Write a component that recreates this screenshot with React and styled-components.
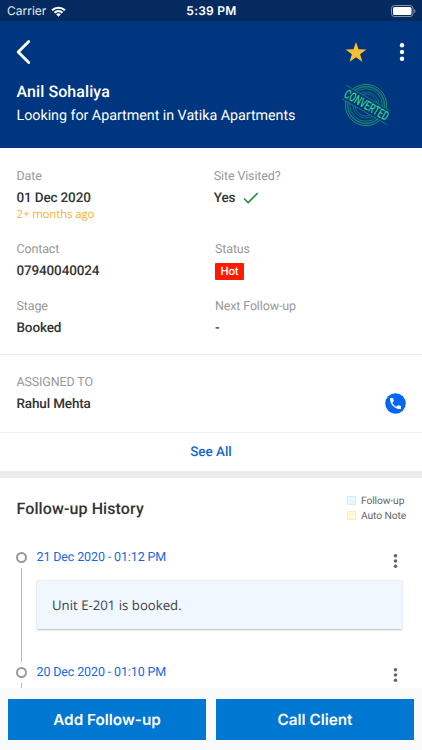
import React from "react";
import styled, { createGlobalStyle } from "styled-components";

const GlobalStyle = createGlobalStyle`
  * { box-sizing: border-box; }
  body { margin: 0; background: #fff; overflow: hidden; }
`;

const Screen = styled.div`
  width: 422px;
  height: 750px;
  display: flex;
  flex-direction: column;
  overflow: hidden;
  background: #fff;
  color: #333;
  font-family: Roboto, "Liberation Sans", sans-serif;
  text-rendering: geometricPrecision;
`;

const StatusBar = styled.div`
  flex: none;
  height: 21px;
  display: grid;
  grid-template-columns: 1fr auto 1fr;
  align-items: center;
  padding: 1px 6px 0 7px;
  background: #052a5f;
  color: #fff;
  font-family: Inter, sans-serif;
  font-size: 12px;
  line-height: 20px;
`;

const Carrier = styled.div`
  display: flex;
  align-items: center;
  gap: 5px;
  color: #e3e9f2;
`;

const Clock = styled.div`
  font-weight: 600;
  letter-spacing: 0.25px;
`;

const BatterySlot = styled.div`
  display: flex;
  justify-content: flex-end;
`;

const Header = styled.header`
  flex: none;
  height: 127px;
  background: #003580;
  color: #fff;
`;

const Toolbar = styled.div`
  height: 60px;
  display: flex;
  align-items: center;
  padding: 1px 16.5px 0 13.5px;
`;

const IconButton = styled.button`
  display: flex;
  padding: 0;
  border: 0;
  background: none;
  color: inherit;
  margin-left: ${(p) => p.$left || "0"};
`;

const ClientRow = styled.div`
  display: flex;
  justify-content: space-between;
  padding: 0 25px 0 16.5px;
`;

const ClientName = styled.h1`
  margin: 0;
  font-size: 16px;
  line-height: 22px;
  font-weight: 500;
  letter-spacing: 0.08px;
`;

const Subtitle = styled.div`
  margin-top: 2px;
  font-size: 14.3px;
  line-height: 22px;
  letter-spacing: -0.03px;
  white-space: nowrap;
`;

const Details = styled.section`
  flex: none;
  height: 207px;
  display: grid;
  grid-template-columns: 198.5px 1fr;
  grid-template-rows: 73px 57px 50px;
  padding: 19px 17px 0 16.5px;
  border-bottom: 1px solid #ededed;
`;

const Field = styled.div`
  margin-left: ${(p) => p.$shift || "0"};
`;

const Label = styled.div`
  font-size: 12.5px;
  line-height: 20px;
  color: #999;
  letter-spacing: -0.14px;
`;

const Value = styled.div`
  display: flex;
  align-items: center;
  gap: 7.5px;
  margin-top: 1px;
  font-size: 13.5px;
  line-height: 20px;
  font-weight: 500;
  letter-spacing: -0.15px;
`;

const Ago = styled.div`
  margin-top: -2px;
  color: #f5b335;
  font-family: "Open Sans", sans-serif;
  font-size: 11.5px;
  line-height: 18px;
  letter-spacing: -0.17px;
`;

const Badge = styled.span`
  display: inline-flex;
  align-items: center;
  justify-content: center;
  width: 29px;
  height: 17.5px;
  margin-top: 1.5px;
  border-radius: 1px;
  background: #ff1a00;
  color: #fff;
  font-size: 11.5px;
  line-height: 17.5px;
`;

const Assigned = styled.section`
  flex: none;
  height: 78px;
  display: flex;
  justify-content: space-between;
  padding: 18px 16.5px 0 16.5px;
  border-bottom: 1px solid #f0f0f0;
`;

const CallIcon = styled.button`
  display: flex;
  align-self: flex-start;
  margin: 20px 0 0;
  padding: 0;
  border: 0;
  background: none;
`;

const SeeAll = styled.button`
  flex: none;
  height: 38px;
  padding: 0;
  border: 0;
  background: #fff;
  color: #1567d6;
  font: 500 13.4px/37px Roboto, sans-serif;
  text-rendering: geometricPrecision;
`;

const Band = styled.div`
  flex: none;
  height: 7px;
  background: #ebebeb;
`;

const HistoryHead = styled.div`
  flex: none;
  height: 67px;
  display: flex;
  justify-content: space-between;
  padding: 14.5px 17px 0 16.5px;
`;

const HistoryTitle = styled.h2`
  margin: 5.5px 0 0;
  font-size: 16px;
  line-height: 22px;
  font-weight: 500;
  letter-spacing: 0.1px;
`;

const Legend = styled.div`
  width: 58px;
`;

const LegendItem = styled.div`
  display: flex;
  align-items: center;
  gap: 5px;
  height: 15.5px;
  font-size: 10.3px;
  line-height: 15px;
  color: #666;
  letter-spacing: -0.12px;
  white-space: nowrap;
`;

const Swatch = styled.span`
  flex: none;
  width: 9px;
  height: 9px;
  border: 1px solid ${(p) => p.$border};
  background: ${(p) => p.$fill};
`;

const Timeline = styled.div`
  flex: 1;
  min-height: 0;
  overflow: hidden;
`;

const Entry = styled.article`
  height: 114.5px;
  display: flex;
  padding: 0 20.5px 0 16px;
`;

const Rail = styled.div`
  flex: none;
  width: 11px;
  margin-right: 9.5px;
  padding-top: 7px;
  display: flex;
  flex-direction: column;
  align-items: center;
`;

const Dot = styled.span`
  flex: none;
  width: 11px;
  height: 11px;
  border: 2px solid #999;
  border-radius: 50%;
`;

const Stem = styled.span`
  width: 1px;
  flex: 1;
  margin: 5px 0 -2px;
  background: #b8b8b8;
`;

const EntryBody = styled.div`
  flex: 1;
`;

const EntryHead = styled.div`
  height: 25px;
  display: flex;
  justify-content: space-between;
  color: #1868dc;
  font-size: 12.5px;
  line-height: 26px;
  letter-spacing: -0.13px;
`;

const DotsButton = styled(IconButton)`
  margin: 8.5px 4px 0 0;
  align-self: flex-start;
  color: #666;
`;

const NoteCard = styled.div`
  height: 48px;
  margin-top: 11px;
  padding-left: 15.5px;
  border-radius: 1px;
  background: #f0f7ff;
  box-shadow: 0 0.5px 2px rgba(0, 0, 0, 0.28);
  color: #444;
  font-family: "Open Sans", sans-serif;
  font-size: 13.2px;
  line-height: 48px;
`;

const Footer = styled.footer`
  flex: none;
  height: 62px;
  display: flex;
  gap: 10px;
  padding: 11px 8px;
  background: #fafafa;
`;

const ActionButton = styled.button`
  flex: 1;
  height: 41px;
  padding: 0;
  border: 0;
  background: #0077d0;
  color: #fff;
  font: 600 15.3px/41px Inter, sans-serif;
  text-rendering: geometricPrecision;
`;

const WifiIcon = () => (
  <svg width="15" height="11" viewBox="0 0 15 11" fill="#fff">
    <path d="M.3 3.5a10.5 10.5 0 0 1 14.4 0l-1.5 1.6a8.3 8.3 0 0 0-11.4 0Z" />
    <path d="M2.7 5.9a7 7 0 0 1 9.6 0l-1.5 1.6a4.8 4.8 0 0 0-6.6 0Z" />
    <path d="M5.1 8.3a3.6 3.6 0 0 1 4.8 0L7.5 10.8Z" />
  </svg>
);

const BatteryIcon = () => (
  <svg width="25" height="12" viewBox="0 0 25 12">
    <rect x="0.5" y="0.5" width="21.5" height="11" rx="3" fill="none" stroke="#8392ae" />
    <rect x="2" y="2" width="18.5" height="8" rx="1.6" fill="#fff" />
    <path d="M23.2 4a2.2 2.2 0 0 1 0 4Z" fill="#8392ae" />
  </svg>
);

const BackIcon = () => (
  <svg width="18" height="26" viewBox="0 0 18 26" fill="none">
    <path d="M14.7 2.5 4.2 13 14.7 23.5" stroke="#fff" strokeWidth="2.9" strokeLinecap="round" strokeLinejoin="round" />
  </svg>
);

const StarIcon = () => (
  <svg width="22" height="20" viewBox="0 0 22 20">
    <path d="m11 0 2.5 7.3 7.8.1-6.2 4.8 2.3 7.5L11 15.2l-6.4 4.5 2.3-7.5L.7 7.4l7.8-.1Z" fill="#fec032" />
  </svg>
);

const Dots = ({ width, height, r }) => (
  <svg width={width} height={height} fill="currentColor">
    <circle cx={width / 2} cy={r} r={r} />
    <circle cx={width / 2} cy={height / 2} r={r} />
    <circle cx={width / 2} cy={height - r} r={r} />
  </svg>
);

const StampIcon = () => (
  <svg width="62" height="48" viewBox="-5 -1 62 48" fill="none" stroke="#1f9b70">
    <circle cx="26" cy="23" r="20.6" strokeWidth="0.9" />
    <circle cx="26" cy="23" r="18.4" strokeWidth="1.6" stroke="#17786e" />
    <circle cx="26" cy="23" r="16.3" strokeWidth="0.7" />
    <circle cx="26" cy="23" r="13" strokeWidth="0.9" stroke="#17786e" />
    <circle cx="26" cy="23" r="11" strokeWidth="0.6" />
    <g transform="rotate(30 26 23)">
      <rect x="0" y="16" width="52" height="13" fill="#003580" stroke="none" />
      <path d="M-1 15.8h51M2 29.6h52" strokeWidth="0.8" stroke="#17856e" />
      <text
        x="26.5"
        y="27.2"
        textAnchor="middle"
        textLength="49"
        lengthAdjust="spacingAndGlyphs"
        fontFamily="Roboto, sans-serif"
        fontSize="13"
        fontWeight="500"
        fill="#36d07f"
        stroke="none"
      >
        CONVERTED
      </text>
    </g>
  </svg>
);

const CheckIcon = () => (
  <svg width="16" height="12" viewBox="0 0 16 12" fill="none">
    <path d="M1 6.5 5.2 10.6 14.7 1" stroke="#2e8b43" strokeWidth="1.7" />
  </svg>
);

const PhoneIcon = () => (
  <svg width="21" height="21" viewBox="0 0 21 21">
    <circle cx="10.5" cy="10.5" r="10.3" fill="#0566f5" />
    <path
      transform="translate(3.2 3.2) scale(.61)"
      d="M6.62 10.79c1.44 2.83 3.76 5.14 6.59 6.59l2.2-2.2c.27-.27.67-.36 1.02-.24 1.12.37 2.33.57 3.57.57.55 0 1 .45 1 1V20c0 .55-.45 1-1 1-9.39 0-17-7.61-17-17 0-.55.45-1 1-1h3.5c.55 0 1 .45 1 1 0 1.25.2 2.45.57 3.57.11.35.03.74-.25 1.02l-2.2 2.2z"
      fill="#fff"
    />
  </svg>
);

const TimelineEntry = ({ date, note }) => (
  <Entry>
    <Rail>
      <Dot />
      <Stem />
    </Rail>
    <EntryBody>
      <EntryHead>
        {date}
        <DotsButton aria-label="Entry options">
          <Dots width={5} height={14} r={1.8} />
        </DotsButton>
      </EntryHead>
      {note && <NoteCard>{note}</NoteCard>}
    </EntryBody>
  </Entry>
);

export default function App() {
  return (
    <Screen>
      <GlobalStyle />
      <StatusBar>
        <Carrier>
          Carrier <WifiIcon />
        </Carrier>
        <Clock>5:39 PM</Clock>
        <BatterySlot>
          <BatteryIcon />
        </BatterySlot>
      </StatusBar>
      <Header>
        <Toolbar>
          <IconButton aria-label="Back">
            <BackIcon />
          </IconButton>
          <IconButton aria-label="Favourite" $left="auto">
            <StarIcon />
          </IconButton>
          <IconButton aria-label="More" $left="31px">
            <Dots width={8} height={18} r={2.2} />
          </IconButton>
        </Toolbar>
        <ClientRow>
          <div>
            <ClientName>Anil Sohaliya</ClientName>
            <Subtitle>Looking for Apartment in Vatika Apartments</Subtitle>
          </div>
          <StampIcon />
        </ClientRow>
      </Header>

      <Details>
        <Field>
          <Label>Date</Label>
          <Value>01 Dec 2020</Value>
          <Ago>2+ months ago</Ago>
        </Field>
        <Field $shift="-1.2px">
          <Label>Site Visited?</Label>
          <Value>
            Yes <CheckIcon />
          </Value>
        </Field>
        <Field>
          <Label>Contact</Label>
          <Value>07940040024</Value>
        </Field>
        <Field>
          <Label>Status</Label>
          <Value>
            <Badge>Hot</Badge>
          </Value>
        </Field>
        <Field>
          <Label>Stage</Label>
          <Value>Booked</Value>
        </Field>
        <Field>
          <Label>Next Follow-up</Label>
          <Value>-</Value>
        </Field>
      </Details>

      <Assigned>
        <div>
          <Label>ASSIGNED TO</Label>
          <Value>Rahul Mehta</Value>
        </div>
        <CallIcon aria-label="Call Rahul Mehta">
          <PhoneIcon />
        </CallIcon>
      </Assigned>
      <SeeAll>See All</SeeAll>
      <Band />

      <HistoryHead>
        <HistoryTitle>Follow-up History</HistoryTitle>
        <Legend>
          <LegendItem>
            <Swatch $fill="#eaf5ff" $border="#d9ebf9" />
            Follow-up
          </LegendItem>
          <LegendItem>
            <Swatch $fill="#fff9d6" $border="#f8efba" />
            Auto Note
          </LegendItem>
        </Legend>
      </HistoryHead>
      <Timeline>
        <TimelineEntry date="21 Dec 2020 - 01:12 PM" note="Unit E-201 is booked." />
        <TimelineEntry date="20 Dec 2020 - 01:10 PM" />
      </Timeline>

      <Footer>
        <ActionButton>Add Follow-up</ActionButton>
        <ActionButton>Call Client</ActionButton>
      </Footer>
    </Screen>
  );
}
